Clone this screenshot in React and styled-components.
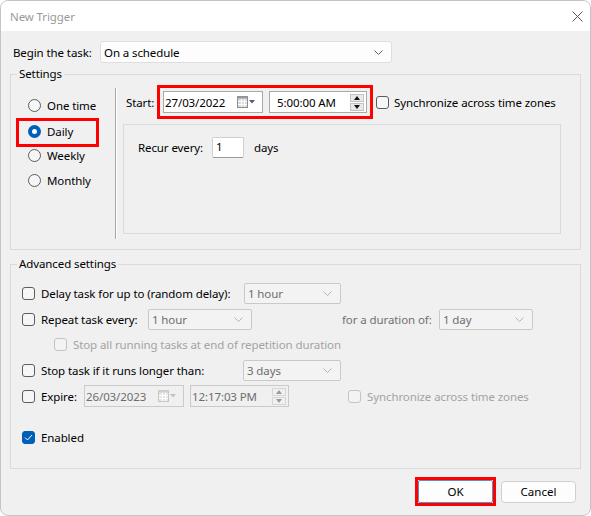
import React from "react";
import styled, { createGlobalStyle } from "styled-components";

const GlobalStyle = createGlobalStyle`
  html, body { margin: 0; padding: 0; background: #ffffff; }
  body {
    font-family: "Noto Sans", "Open Sans", sans-serif;
    font-size: 11.5px;
    letter-spacing: -0.1px;
    color: #000;
  }
  * { box-sizing: border-box; }
`;

const Window = styled.div`
  width: 591px;
  height: 516px;
  border: 1px solid #c4c4c4;
  border-radius: 8px;
  overflow: hidden;
  background: #f0f0f0;
  display: flex;
  flex-direction: column;
`;

const TitleBar = styled.div`
  height: 30px;
  flex: none;
  background: #fff;
  display: flex;
  align-items: center;
  justify-content: space-between;
  padding: 0 7px 0 9px;
  color: #9a9a9a;
`;

const Content = styled.div`
  padding: 10px 9px 0 9px;
  display: flex;
  flex-direction: column;
`;

const Row = styled.div`
  display: flex;
  align-items: center;
  height: ${(p) => p.$h || 26}px;
  padding-left: ${(p) => p.$indent || 0}px;
  margin-top: ${(p) => p.$mt || 0}px;
`;

const Label = styled.span`
  flex: none;
  width: ${(p) => (p.$w ? p.$w + "px" : "auto")};
  padding-left: ${(p) => p.$pl || 0}px;
  margin-left: ${(p) => p.$ml || 0}px;
  color: ${(p) => (p.$muted ? "#a3a3a3" : p.$grey ? "#707070" : "#000")};
  white-space: nowrap;
`;

const Group = styled.fieldset`
  margin: ${(p) => p.$mt}px 0 0 0;
  padding: 0;
  min-width: 0;
  border: 1px solid #dadada;
`;

const Legend = styled.legend`
  margin-left: 6px;
  padding: 0 2px;
  line-height: 16px;
`;

const SettingsBody = styled.div`
  display: flex;
  height: 167px;
  padding-top: 3px;
`;

const RadioColumn = styled.div`
  width: 104px;
  flex: none;
  padding-top: 8px;
  display: flex;
  flex-direction: column;
`;

const RadioRow = styled.div`
  display: flex;
  align-items: center;
  height: 25px;
  padding-left: 17px;
  ${(p) =>
    p.$highlight &&
    `
    width: 83px;
    height: 29px;
    margin: 0 0 -4px 5px;
    padding: 0 0 2px 9px;
    border: 3px solid #ff0000;
  `}
`;

const RadioDot = styled.span`
  flex: none;
  width: 13px;
  height: 13px;
  border-radius: 50%;
  margin-right: 6px;
  border: ${(p) => (p.$checked ? "none" : "1px solid #5c5c5c")};
  background: ${(p) => (p.$checked ? "#005fb8" : "#f6f6f6")};
  display: flex;
  align-items: center;
  justify-content: center;
  &::after {
    content: "";
    display: ${(p) => (p.$checked ? "block" : "none")};
    width: 5px;
    height: 5px;
    border-radius: 50%;
    background: #fff;
  }
`;

const Separator = styled.div`
  width: 1px;
  flex: none;
  margin: 3px 0 10px 0;
  background: #a7a7a7;
  box-shadow: 1px 0 0 #ffffff;
`;

const RightColumn = styled.div`
  flex: 1;
  padding-left: 7px;
  display: flex;
  flex-direction: column;
`;

const RedFrame = styled.div`
  display: flex;
  align-items: center;
  gap: ${(p) => p.$gap || 0}px;
  padding: ${(p) => p.$pad || 0}px;
  border: 3px solid #ff0000;
`;

const RecurBox = styled.div`
  margin-top: 5px;
  width: 438px;
  height: 110px;
  border: 1px solid #dadada;
  padding: 12px 0 0 14px;
`;

const TextInput = styled.div`
  width: ${(p) => p.$w}px;
  height: 21px;
  background: #fff;
  border: 1px solid #cfcfcf;
  border-bottom-color: #9a9a9a;
  border-radius: 2px;
  padding: 0 3px;
  line-height: 17px;
`;

const Combo = styled.div`
  flex: none;
  width: ${(p) => p.$w}px;
  height: ${(p) => p.$h || 21}px;
  display: flex;
  align-items: center;
  justify-content: space-between;
  padding: 0 8px 0 3px;
  border: 1px solid ${(p) => (p.$disabled ? "#c9c9c9" : "#dedede")};
  border-radius: ${(p) => (p.$disabled ? 2 : 3)}px;
  background: ${(p) => (p.$disabled ? "#f3f3f3" : "#fdfdfd")};
  color: ${(p) => (p.$disabled ? "#6d6d6d" : "#000")};
`;

const DateBox = styled.div`
  flex: none;
  width: ${(p) => p.$w}px;
  height: 22px;
  display: flex;
  align-items: center;
  justify-content: space-between;
  padding: 0 ${(p) => p.$pr || 2}px 0 ${(p) => p.$pl || 1}px;
  border: 1px solid ${(p) => (p.$disabled ? "#cacaca" : "#a9a9a9")};
  background: ${(p) => (p.$disabled ? "#f0f0f0" : "#ffffff")};
  color: ${(p) => (p.$disabled ? "#6d6d6d" : "#000")};
`;

const Spinner = styled.div`
  display: flex;
  flex-direction: column;
  gap: 1px;
`;

const SpinBtn = styled.div`
  width: 14px;
  height: 8px;
  display: flex;
  align-items: center;
  justify-content: center;
  background: ${(p) => (p.$disabled ? "#f0f0f0" : "#e9e9e9")};
  border: 1px solid ${(p) => (p.$disabled ? "#d6d6d6" : "#c2c2c2")};
`;

const Check = styled.span`
  flex: none;
  width: 13px;
  height: 13px;
  margin-right: 6px;
  border-radius: 3px;
  display: flex;
  align-items: center;
  justify-content: center;
  border: 1px solid
    ${(p) => (p.$checked ? "#005fb8" : p.$disabled ? "#c4c4c4" : "#5c5c5c")};
  background: ${(p) => (p.$checked ? "#005fb8" : p.$disabled ? "#f3f3f3" : "#f6f6f6")};
`;

const AdvancedBody = styled.div`
  padding: 8px 0 18px 11px;
  display: flex;
  flex-direction: column;
`;

const ButtonBar = styled.div`
  margin-top: 8px;
  padding-right: 5px;
  display: flex;
  justify-content: flex-end;
  align-items: center;
  gap: 5px;
`;

const Button = styled.button`
  width: 75px;
  height: ${(p) => (p.$primary ? 23 : 22)}px;
  font: inherit;
  color: #000;
  background: #fdfdfd;
  border: 1px solid ${(p) => (p.$primary ? "#5b8fc7" : "#d0d0d0")};
  border-radius: ${(p) => (p.$primary ? 2 : 4)}px;
  padding: 0;
`;

const Chevron = ({ disabled }) => (
  <svg width="9" height="5" viewBox="0 0 9 5">
    <polyline
      points="0.5,0.5 4.5,4.5 8.5,0.5"
      fill="none"
      stroke={disabled ? "#b4b4b4" : "#5f5f5f"}
      strokeWidth="1"
    />
  </svg>
);

const CalendarIcon = ({ disabled }) => (
  <svg width="19" height="12" viewBox="0 0 19 12">
    <rect x="0.5" y="0.5" width="10" height="11" fill={disabled ? "#e6e6e6" : "#d9d9d9"} stroke={disabled ? "#c6c6c6" : "#8d8d8d"} />
    <rect x="0.5" y="0.5" width="10" height="2" fill={disabled ? "#cfcfcf" : "#9a9a9a"} />
    {[4.5, 7.5].map((x) => (
      <line key={"v" + x} x1={x} y1="3" x2={x} y2="11" stroke="#fff" strokeWidth="1" />
    ))}
    {[5.5, 8.5].map((y) => (
      <line key={"h" + y} x1="1" y1={y} x2="10" y2={y} stroke="#fff" strokeWidth="1" />
    ))}
    <polygon points="12,4 18,4 15,7.5" fill={disabled ? "#c3c3c3" : "#4b5e86"} />
  </svg>
);

const Arrow = ({ up, disabled }) => (
  <svg width="6" height="4" viewBox="0 0 6 4">
    <polygon
      points={up ? "0,4 6,4 3,0" : "0,0 6,0 3,4"}
      fill={disabled ? "#9a9a9a" : "#111"}
    />
  </svg>
);

const TimeSpin = ({ disabled }) => (
  <Spinner>
    <SpinBtn $disabled={disabled}>
      <Arrow up disabled={disabled} />
    </SpinBtn>
    <SpinBtn $disabled={disabled}>
      <Arrow disabled={disabled} />
    </SpinBtn>
  </Spinner>
);

const Tick = () => (
  <svg width="9" height="7" viewBox="0 0 9 7">
    <polyline points="1,3.5 3.5,6 8,1" fill="none" stroke="#fff" strokeWidth="1" />
  </svg>
);

const CloseIcon = () => (
  <svg width="11" height="11" viewBox="0 0 11 11">
    <path d="M0.5 0.5 L10.5 10.5 M10.5 0.5 L0.5 10.5" stroke="#5a5a5a" strokeWidth="1" />
  </svg>
);

export default function App() {
  const schedules = ["One time", "Daily", "Weekly", "Monthly"];

  return (
    <>
      <GlobalStyle />
      <Window>
        <TitleBar>
          <span>New Trigger</span>
          <CloseIcon />
        </TitleBar>
        <Content>
          <Row $h={22}>
            <Label $w={90} $pl={3}>Begin the task:</Label>
            <Combo $w={292} $h={22}>
              <span>On a schedule</span>
              <Chevron />
            </Combo>
          </Row>

          <Group $mt={3}>
            <Legend>Settings</Legend>
            <SettingsBody>
              <RadioColumn>
                {schedules.map((s) => (
                  <RadioRow key={s} $highlight={s === "Daily"}>
                    <RadioDot $checked={s === "Daily"} />
                    <span>{s}</span>
                  </RadioRow>
                ))}
              </RadioColumn>
              <Separator />
              <RightColumn>
                <Row $h={34} $indent={3}>
                  <Label $w={31}>Start:</Label>
                  <RedFrame $pad={3} $gap={6}>
                    <DateBox $w={100} $pr={6}>
                      <span>27/03/2022</span>
                      <CalendarIcon />
                    </DateBox>
                    <DateBox $w={98} $pl={7}>
                      <span>5:00:00 AM</span>
                      <TimeSpin />
                    </DateBox>
                  </RedFrame>
                  <Check style={{ marginLeft: 3 }} />
                  <Label $ml={-1}>Synchronize across time zones</Label>
                </Row>
                <RecurBox>
                  <Row $h={21}>
                    <Label $w={74}>Recur every:</Label>
                    <TextInput $w={32}>1</TextInput>
                    <Label $ml={10}>days</Label>
                  </Row>
                </RecurBox>
              </RightColumn>
            </SettingsBody>
          </Group>

          <Group $mt={6}>
            <Legend>Advanced settings</Legend>
            <AdvancedBody>
              <Row>
                <Check />
                <Label $w={203}>Delay task for up to (random delay):</Label>
                <Combo $w={97} $disabled>
                  <span>1 hour</span>
                  <Chevron disabled />
                </Combo>
              </Row>
              <Row>
                <Check />
                <Label $w={107}>Repeat task every:</Label>
                <Combo $w={104} $disabled>
                  <span>1 hour</span>
                  <Chevron disabled />
                </Combo>
                <Label $ml={90} $w={97} $grey>for a duration of:</Label>
                <Combo $w={94} $disabled>
                  <span>1 day</span>
                  <Chevron disabled />
                </Combo>
              </Row>
              <Row $h={25} $indent={32}>
                <Check $disabled />
                <Label $muted>Stop all running tasks at end of repetition duration</Label>
              </Row>
              <Row>
                <Check />
                <Label $w={202}>Stop task if it runs longer than:</Label>
                <Combo $w={98} $disabled>
                  <span>3 days</span>
                  <Chevron disabled />
                </Combo>
              </Row>
              <Row>
                <Check />
                <Label $w={43}>Expire:</Label>
                <DateBox $w={100} $pr={6} $disabled>
                  <span>26/03/2023</span>
                  <CalendarIcon disabled />
                </DateBox>
                <DateBox $w={99} $disabled style={{ marginLeft: 6 }}>
                  <span>12:17:03 PM</span>
                  <TimeSpin disabled />
                </DateBox>
                <Check $disabled style={{ marginLeft: 59 }} />
                <Label $muted>Synchronize across time zones</Label>
              </Row>
              <Row $mt={15}>
                <Check $checked>
                  <Tick />
                </Check>
                <Label>Enabled</Label>
              </Row>
            </AdvancedBody>
          </Group>

          <ButtonBar>
            <RedFrame>
              <Button $primary>OK</Button>
            </RedFrame>
            <Button>Cancel</Button>
          </ButtonBar>
        </Content>
      </Window>
    </>
  );
}
